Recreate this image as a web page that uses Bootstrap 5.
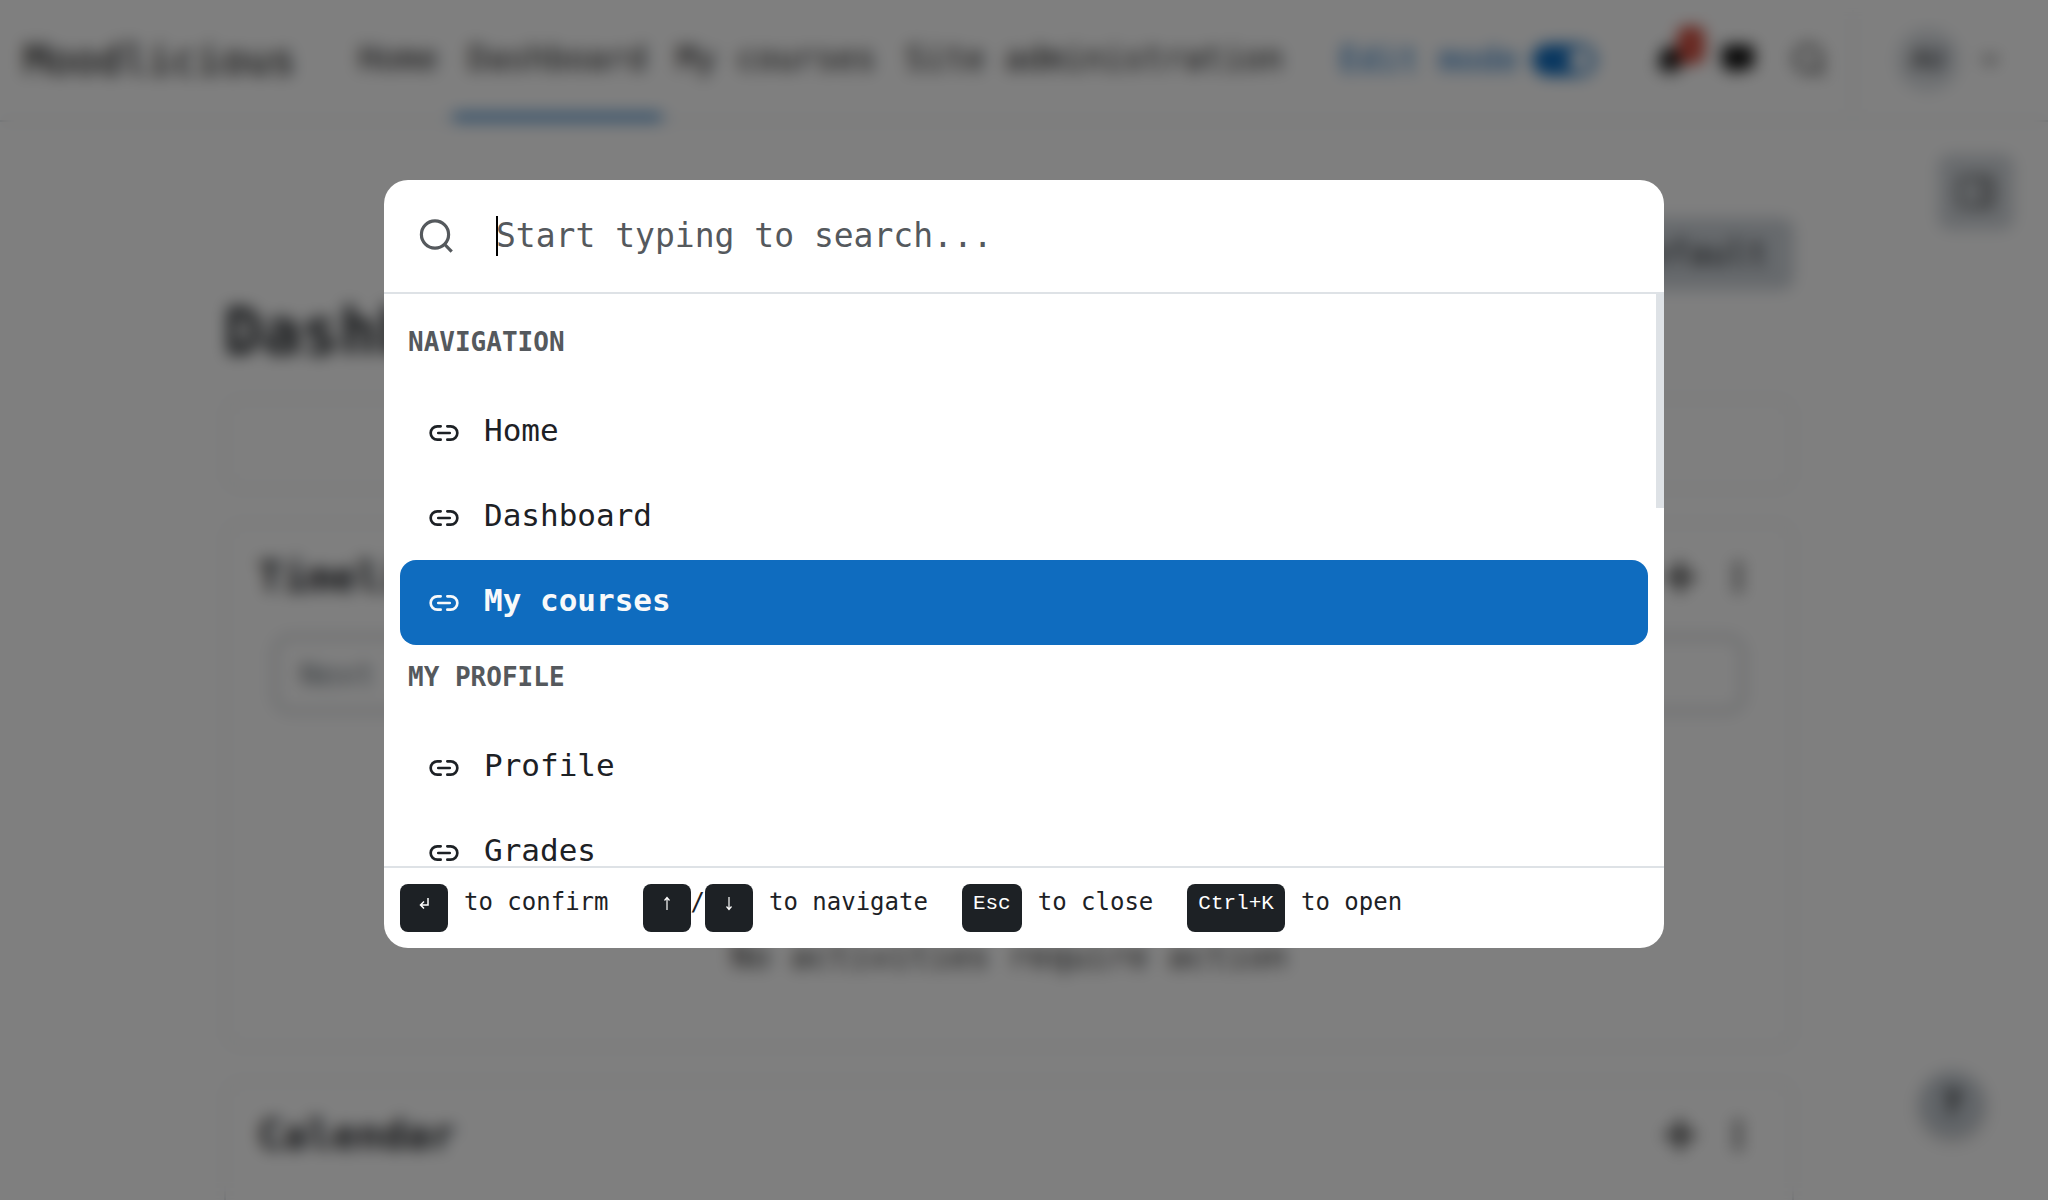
<!DOCTYPE html>
<html lang="en">
<head>
<meta charset="utf-8">
<meta name="viewport" content="width=device-width, initial-scale=1">
<title>Dashboard | Moodlicious</title>
<link href="https://cdn.jsdelivr.net/npm/bootstrap@5.3.0/dist/css/bootstrap.min.css" rel="stylesheet">
<style>
:root { --ink: #1d2125; --brand: #0f6cbf; --line: #dee2e6; --muted: #55595d; }
body { font-family: "DejaVu Sans Mono", monospace; color: var(--ink); background: #fff; font-size: 33px; line-height: 48px; height: 100vh; overflow: hidden; }
svg { display: block; flex: none; }
a { color: inherit; text-decoration: none; }

/* dashboard page */
.topbar { height: 122px; padding: 0 48px 0 24px; border-bottom: 2px solid var(--line); }
.site-name { font-size: 41px; margin-right: 48px; color: #000; }
.top-link { height: 120px; padding: 0 15px; line-height: 118px; color: #1d1d1d; border-bottom: 6px solid transparent; }
.top-link.current { border-bottom-color: var(--brand); }
.edit-mode { gap: 14px; color: var(--brand); margin-right: 60px; }
.edit-mode .form-check-input { width: 64px; height: 32px; margin: 0; border-color: var(--brand); background-color: var(--brand); }
.top-icons { gap: 38px; margin-right: 26px; }
.top-icons button, .plain-btn { border: 0; background: none; padding: 0; color: #111; }
.alert-count { top: -18px; left: 22px; width: 26px; height: 36px; border-radius: 8px; background: #ca3120; color: #fff; font-size: 20px; line-height: 36px; }
.user-box { height: 100px; border-left: 2px solid var(--line); padding-left: 42px; gap: 20px; }
.avatar { width: 64px; height: 64px; background: var(--line); font-size: 28px; }
.page-body { max-width: 1600px; padding: 96px 30px 0 0; margin: 0 auto; }
.reset-btn { height: 72px; padding: 0 26px; border: 0; border-radius: 12px; background: #ced4da; color: var(--ink); }
.page-title { font-size: 64px; font-weight: 700; line-height: 76px; margin: 4px 0 28px; }
.block-card { border: 2px solid var(--line); border-radius: 16px; padding: 32px; margin-bottom: 32px; }
.block-card h2 { font-size: 41px; font-weight: 700; line-height: 42px; margin: 0; }
.block-empty { height: 92px; }
.block-actions { gap: 38px; padding-right: 18px; }
.timeline { height: 526px; }
.range-select { height: 76px; border: 2px solid #8f959e; border-radius: 16px; padding: 0 24px; color: #6a737b; font-size: 31px; background: #fff; appearance: none; }
.timeline-form { padding: 38px 16px 0; }
.timeline-form hr { margin: 38px 0 0; border-color: #8f959e; }
.empty-note { margin-top: 182px; color: #333; }
.drawer-btn { position: fixed; top: 154px; right: 34px; width: 76px; height: 76px; border: 0; border-radius: 12px; background: #d3d8dd; }
.help-btn { position: fixed; bottom: 64px; right: 64px; width: 64px; height: 64px; border: 0; background: #c3cad1; box-shadow: 0 4px 12px rgba(0,0,0,.25); font-weight: 700; }

/* command palette */
.veil { display: flex; align-items: flex-start; justify-content: center; padding: 180px 24px 24px; background: rgba(0,0,0,.5); backdrop-filter: blur(8px); z-index: 1050; }
.palette { width: 100%; max-width: 1280px; background: #fff; border-radius: 24px; overflow: hidden; }
.palette-head { height: 114px; padding: 0 34px; border-bottom: 2px solid var(--line); gap: 42px; color: var(--muted); }
.palette-head input { width: 100%; border: 0; outline: 0; padding: 0; font-size: 33px; line-height: 40px; color: var(--ink); background: none; }
.palette-head input::placeholder { color: var(--muted); opacity: 1; }
.caret { left: 0; top: 4px; width: 2px; height: 40px; background: #000; }
.palette-list { height: 572px; padding: 16px; overflow: hidden; }
.scroll-thumb { top: 0; right: 0; width: 8px; height: 214px; background: var(--line); }
.group-name { font-size: 26px; line-height: 64px; font-weight: 700; color: var(--muted); text-transform: uppercase; padding: 0 8px 16px; margin: 0; }
.entry { height: 85px; padding: 0 28px; gap: 24px; border-radius: 16px; font-size: 31px; color: var(--ink); }
.entry span { padding-bottom: 6px; }
.entry.selected { background: var(--brand); color: #f8f9fa; font-weight: 700; }
.palette-foot { border-top: 2px solid var(--line); padding: 16px; font-size: 24px; line-height: 36px; gap: 34px; }
.palette-foot div { gap: 16px; }
.key-cap { display: flex; justify-content: center; min-width: 48px; height: 48px; padding: 2px 11px; border-radius: 8px; background: var(--ink); color: #fff; font-family: "Liberation Mono", monospace; font-size: 21px; line-height: 36px; }
.key-cap svg { margin-top: 8px; }
</style>
</head>
<body>
<svg class="d-none" aria-hidden="true">
  <symbol id="link" viewBox="0 0 24 24"><g fill="none" stroke="currentColor" stroke-width="2" stroke-linecap="round" stroke-linejoin="round"><path d="M9.5 17H7A5 5 0 0 1 7 7h2.500M14.500 7H17a5 5 0 0 1 0 10h-2.500M7.700 12h8.600"/></g></symbol>
  <symbol id="move" viewBox="0 0 32 32"><path fill="currentColor" d="M16 0l6 7h-4v7h7v-4l7 6-7 6v-4h-7v7h4l-6 7-6-7h4v-7H7v4l-7-6 7-6v4h7V7h-4z"/></symbol>
  <symbol id="dots" viewBox="0 0 8 32"><g fill="currentColor"><circle cx="4" cy="5" r="3.500"/><circle cx="4" cy="16" r="3.500"/><circle cx="4" cy="27" r="3.500"/></g></symbol>
  <symbol id="lens" viewBox="0 0 36 36"><g fill="none" stroke="currentColor" stroke-width="3.200"><circle cx="17" cy="16.500" r="13.600"/><path d="M26.300 26l7.400 7.700"/></g></symbol>
</svg>

<header class="topbar d-flex align-items-center">
  <a href="#" class="site-name">Moodlicious</a>
  <nav class="d-flex me-auto">
    <a href="#" class="top-link">Home</a>
    <a href="#" class="top-link current">Dashboard</a>
    <a href="#" class="top-link">My courses</a>
    <a href="#" class="top-link">Site administration</a>
  </nav>
  <div class="edit-mode form-switch d-flex align-items-center p-0">
    <label for="edit">Edit mode</label>
    <input class="form-check-input" type="checkbox" role="switch" id="edit" checked>
  </div>
  <div class="top-icons d-flex align-items-center">
    <button class="position-relative" aria-label="Notifications">
      <svg width="28" height="30" viewBox="0 0 28 30"><path fill="currentColor" d="M14 0a2 2 0 0 1 2 2v1c5 1 8 5 8 10 0 5 1 7 3 9v2H1v-2c2-2 3-4 3-9 0-5 3-9 8-10V2a2 2 0 0 1 2-2zM10 26h8a4 4 0 0 1-8 0z"/></svg>
      <span class="alert-count position-absolute">2</span>
    </button>
    <button aria-label="Messages"><svg width="32" height="30" viewBox="0 0 32 30"><path fill="currentColor" d="M4 0h24a4 4 0 0 1 4 4v16a4 4 0 0 1-4 4h-9l-8 6v-6H4a4 4 0 0 1-4-4V4a4 4 0 0 1 4-4z"/></svg></button>
    <button aria-label="Search"><svg width="34" height="34"><use href="#lens"/></svg></button>
  </div>
  <div class="user-box d-flex align-items-center">
    <span class="avatar rounded-circle d-flex align-items-center justify-content-center">AU</span>
    <svg width="20" height="14" viewBox="0 0 20 14"><path d="M3 3l7 7 7-7" fill="none" stroke="#333" stroke-width="3"/></svg>
  </div>
</header>

<main class="page-body">
  <div class="d-flex justify-content-end"><button class="reset-btn">Reset page to default</button></div>
  <h1 class="page-title">Dashboard</h1>
  <section class="block-card block-empty"></section>
  <section class="block-card timeline">
    <div class="d-flex align-items-center justify-content-between">
      <h2>Timeline</h2>
      <div class="block-actions d-flex align-items-center">
        <button class="plain-btn" aria-label="Move block"><svg width="32" height="32"><use href="#move"/></svg></button>
        <button class="plain-btn" aria-label="Block actions"><svg width="8" height="32"><use href="#dots"/></svg></button>
      </div>
    </div>
    <div class="timeline-form">
      <select class="range-select w-100" aria-label="Filter timeline by date"><option>Next 7 days</option></select>
      <hr>
    </div>
    <p class="empty-note text-center">No activities require action</p>
  </section>
  <section class="block-card pb-5">
    <div class="d-flex align-items-center justify-content-between pb-5">
      <h2>Calendar</h2>
      <div class="block-actions d-flex align-items-center">
        <button class="plain-btn" aria-label="Move block"><svg width="32" height="32"><use href="#move"/></svg></button>
        <button class="plain-btn" aria-label="Block actions"><svg width="8" height="32"><use href="#dots"/></svg></button>
      </div>
    </div>
  </section>
</main>
<button class="drawer-btn d-flex align-items-center justify-content-center" aria-label="Open block drawer">
  <svg width="36" height="32" viewBox="0 0 36 32"><rect x="2" y="2" width="32" height="28" rx="3" fill="none" stroke="#333" stroke-width="3"/><path fill="none" stroke="#333" stroke-width="3" d="M25 2v28"/></svg>
</button>
<button class="help-btn rounded-circle" aria-label="Help">?</button>

<div class="veil position-fixed top-0 start-0 w-100 h-100">
  <div class="palette" role="dialog" aria-label="Command palette">
    <div class="palette-head d-flex align-items-center">
      <svg width="36" height="36"><use href="#lens"/></svg>
      <div class="position-relative flex-grow-1">
        <input type="text" aria-label="Search" placeholder="Start typing to search...">
        <i class="caret position-absolute"></i>
      </div>
    </div>
    <div class="position-relative">
      <div class="palette-list">
        <h3 class="group-name">Navigation</h3>
        <a href="#" class="entry d-flex align-items-center"><svg width="32" height="32"><use href="#link"/></svg><span>Home</span></a>
        <a href="#" class="entry d-flex align-items-center"><svg width="32" height="32"><use href="#link"/></svg><span>Dashboard</span></a>
        <a href="#" class="entry selected d-flex align-items-center"><svg width="32" height="32"><use href="#link"/></svg><span>My courses</span></a>
        <h3 class="group-name">My profile</h3>
        <a href="#" class="entry d-flex align-items-center"><svg width="32" height="32"><use href="#link"/></svg><span>Profile</span></a>
        <a href="#" class="entry d-flex align-items-center"><svg width="32" height="32"><use href="#link"/></svg><span>Grades</span></a>
      </div>
      <div class="scroll-thumb position-absolute"></div>
    </div>
    <div class="palette-foot d-flex align-items-start">
      <div class="d-flex"><kbd class="key-cap"><svg width="14" height="18" viewBox="0 0 14 18" fill="none" stroke="currentColor" stroke-width="1.500"><path d="M11 4v7H4M7 7.500L3.500 11 7 14.500"/></svg></kbd><span>to confirm</span></div>
      <div class="d-flex"><span class="d-flex"><kbd class="key-cap"><svg width="14" height="18" viewBox="0 0 14 18" fill="none" stroke="currentColor" stroke-width="1.200"><path d="M7 16V4M4.500 6.500L7 3.500l2.500 3"/></svg></kbd>/<kbd class="key-cap"><svg width="14" height="18" viewBox="0 0 14 18" fill="none" stroke="currentColor" stroke-width="1.200"><path d="M7 3v12M4.500 12.500L7 15.500l2.500-3"/></svg></kbd></span><span>to navigate</span></div>
      <div class="d-flex"><kbd class="key-cap">Esc</kbd><span>to close</span></div>
      <div class="d-flex"><kbd class="key-cap">Ctrl+K</kbd><span>to open</span></div>
    </div>
  </div>
</div>
<script src="https://cdn.jsdelivr.net/npm/bootstrap@5.3.0/dist/js/bootstrap.bundle.min.js"></script>
</body>
</html>
